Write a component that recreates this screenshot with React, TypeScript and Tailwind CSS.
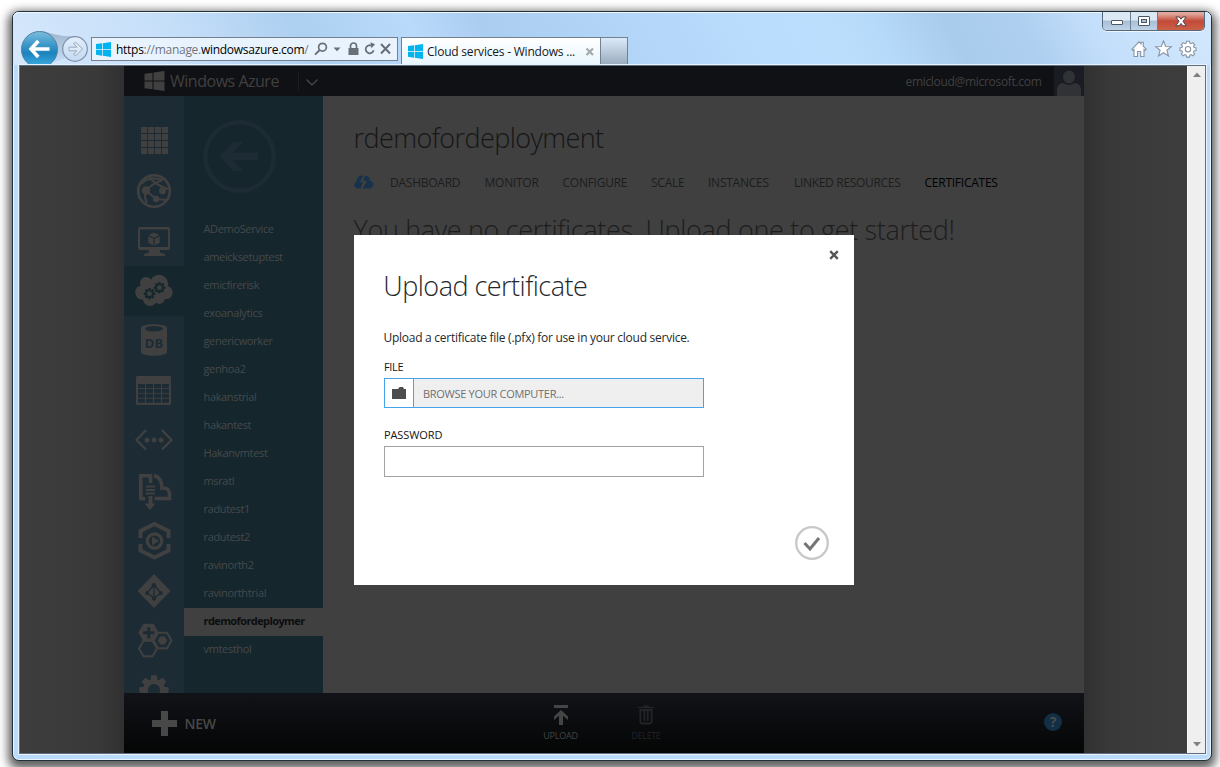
import type { ReactNode } from "react";

const Logo = ({ className }: { className: string }) => (
  <svg viewBox="0 0 16 16" className={className} fill="currentColor">
    <path d="M0 2.2 6.4 1.3V7.5H0zM7.2 1.2 16 0V7.5H7.2zM0 8.3H6.4V14.6L0 13.7zM7.2 8.3H16V16L7.2 14.7z" />
  </svg>
);

const BackForward = () => (
  <svg width="72" height="53" viewBox="0 0 72 53" className="shrink-0">
    <defs>
      <linearGradient id="backFill" x1="0" y1="0" x2="0" y2="1">
        <stop offset="0" stopColor="#7cbcdc" />
        <stop offset="0.4" stopColor="#3795c8" />
        <stop offset="0.6" stopColor="#1c83bd" />
        <stop offset="1" stopColor="#3fb0e2" />
      </linearGradient>
      <linearGradient id="fwdFill" x1="0" y1="0" x2="0" y2="1">
        <stop offset="0" stopColor="#e3eefa" />
        <stop offset="1" stopColor="#c3daf2" />
      </linearGradient>
      <linearGradient id="bridgeFill" x1="0" y1="0" x2="0" y2="1">
        <stop offset="0" stopColor="#9fb6cd" />
        <stop offset="1" stopColor="#c3dcf5" />
      </linearGradient>
    </defs>
    <path d="M24 19C36 23 46 25 56 24L46 46 36 50z" fill="url(#bridgeFill)" />
    <circle cx="20.500" cy="37.500" r="18" fill="url(#backFill)" stroke="#53809f" strokeWidth="1" />
    <path d="M30.500 37H12.500M19.300 29 12 37l7.300 8" fill="none" stroke="#fff" strokeWidth="3.600" />
    <circle cx="56" cy="37" r="12.300" fill="url(#fwdFill)" stroke="#7f93a8" strokeWidth="1.200" />
    <path d="M50 35.200h8l-3.400-3.600 2.200-1.400 6.700 6.800-6.700 6.800-2.200-1.400 3.400-3.600h-8z" fill="#dfeaf6" stroke="#98abc0" strokeWidth="1" />
  </svg>
);

const UrlIcons = () => (
  <svg width="80" height="16" viewBox="0 0 80 16" className="shrink-0" fill="none" stroke="#696f76">
    <circle cx="9.500" cy="6.200" r="3.900" strokeWidth="1.700" />
    <path d="M6.500 9.200 2 13.600" strokeWidth="2" />
    <path d="M20.500 6.500h7l-3.500 3.800z" fill="#696f76" stroke="none" />
    <rect x="35.500" y="7" width="10" height="7" rx="0.500" fill="#696f76" stroke="none" />
    <path d="M37.500 7.500V5a3 3 0 0 1 6 0v2.500" strokeWidth="1.700" />
    <path d="M60.600 9.200A4 4 0 1 1 58.500 4.700" strokeWidth="1.800" />
    <path d="M57.500 1.200 62 3.200 58.500 7.200z" fill="#696f76" stroke="none" />
    <path d="m68 3 9 9.500M77 3 68 12.500" strokeWidth="2" />
  </svg>
);

const BrowserTools = () => (
  <svg width="66" height="18" viewBox="0 0 66 18" fill="#fff" stroke="#8795a5" strokeWidth="1.100" className="shrink-0">
    <path d="M.8 9.300 8 1.800l2 2V2.300h2.300v4l3 3-1.300 1.200-1-.9v6.900H9.700v-5H6.500v5H3v-6.900l-1 .9z" />
    <path d="M32.500 1l2.200 5.500 5.600.2-4.400 3.600 1.600 5.700-5-3.300-5 3.300 1.600-5.700-4.400-3.600 5.600-.2z" />
    <path d="M55.500 1.200h3l.3 2 1.300.5L61.800 2.600 63.700 4.500 62.600 6.200 63 7.500l2 .3v2.800l-2 .3-.5 1.300 1.200 1.700-1.900 1.900-1.700-1.200-1.300.5-.3 2h-3l-.3-2-1.300-.5-1.700 1.200-1.900-1.900 1.200-1.700-.5-1.300-2-.3V7.800l2-.3.500-1.300-1.200-1.700 1.900-1.900 1.700 1.100 1.300-.5z" />
    <circle cx="57" cy="9.200" r="2.700" />
  </svg>
);

const WindowButtons = () => (
  <div className="flex h-[19px] w-[103px] overflow-hidden rounded-b-[5px] border border-t-0 border-[#55687c] shadow-[0_1px_0_#ffffffb0]">
    <div className="flex w-[28px] items-end justify-center border-r border-[#6b7f94] bg-linear-to-b from-[#dce9f5] from-45% via-[#a9bfd5] via-50% to-[#bdd3e8] pb-[4px]">
      <svg width="12" height="6"><rect x=".5" y=".5" width="11" height="4" rx=".5" fill="#fff" stroke="#4b5666" /></svg>
    </div>
    <div className="flex w-[27px] items-center justify-center border-r border-[#6b7f94] bg-linear-to-b from-[#dce9f5] from-45% via-[#a9bfd5] via-50% to-[#bdd3e8]">
      <svg width="12" height="10"><rect x=".5" y=".5" width="11" height="9" rx=".5" fill="#fff" stroke="#4b5666" /><rect x="3.500" y="3.500" width="5" height="3" fill="#a9bfd5" stroke="#4b5666" /></svg>
    </div>
    <div className="flex flex-1 items-center justify-center bg-linear-to-b from-[#dfa79d] from-10% via-[#c24a38] via-50% to-[#cc6046]">
      <svg width="12" height="11" viewBox="0 0 12 11"><path d="M.8 1h3.400L6 3.200 7.800 1h3.400L8 5.300l3.300 4.500H7.800L6 7.500 4.200 9.800H.7L4 5.300z" fill="#fff" stroke="#4d4048" /></svg>
    </div>
  </div>
);

const hex = (cx: number, cy: number, r: number) => {
  const h = r * 0.87;
  return `M${cx - r} ${cy}L${cx - r / 2} ${cy - h}H${cx + r / 2}L${cx + r} ${cy}L${cx + r / 2} ${cy + h}H${cx - r / 2}z`;
};

const G = "#404040";
const D = "#1d2b34";

const GearShape = ({ x, y, s, fill, hole }: { x: number; y: number; s: number; fill: string; hole: string }) => (
  <g transform={`translate(${x} ${y}) scale(${s})`}>
    {[0, 45, 90, 135].map((a) => (
      <rect key={a} x="-2.500" y="-12" width="5" height="24" rx="1" fill={fill} transform={`rotate(${a})`} />
    ))}
    <circle r="9" fill={fill} />
    <circle r="5" fill={hole} />
  </g>
);

const navIcons: ReactNode[] = [
  <g fill={G}>
    {[0, 1, 2, 3].map((r) => [0, 1, 2, 3].map((c) => <rect key={`${r}${c}`} x={7 + c * 7} y={7 + r * 7} width="6" height="6" />))}
  </g>,
  <g fill="none" stroke={G}>
    <circle cx="20" cy="21" r="15.800" strokeWidth="2.600" />
    <path d="M7 14C12 8 20 7 29 10M15 7C20 13 27 17 34 19M12 20.500C16 16 22 12 28 10.500M12 20.500 22 29M22 29 32 30M12 20.500C10 25 11 29 13 33" strokeWidth="2.200" />
    <circle cx="12" cy="20.500" r="4.200" fill={G} stroke="none" />
    <circle cx="28.500" cy="21" r="3.400" fill={G} stroke="none" />
    <circle cx="22" cy="29" r="3.200" fill={G} stroke="none" />
  </g>,
  <g fill={G}>
    <path fillRule="evenodd" d="M6 7h28a2 2 0 0 1 2 2v19a2 2 0 0 1-2 2H26v2.500l5 1.500q1 2-1 2H11q-2 0-1-2l5-1.500V30H6a2 2 0 0 1-2-2V9a2 2 0 0 1 2-2zM6 9.500v17.500h28V9.500z" />
    <path d="m20 12.500 5.500 2.600L20 17.800l-5.500-2.700zM14.200 16.200l5.200 2.600v6.700l-5.200-2.700zM25.800 16.200l-5.200 2.600v6.700l5.200-2.700z" />
  </g>,
  <g>
    <g fill={G}>
      <circle cx="8.500" cy="22.500" r="7.300" /><circle cx="12" cy="13" r="6" /><circle cx="25" cy="14" r="9.200" />
      <circle cx="32" cy="22.500" r="6.700" /><circle cx="16" cy="29" r="7" /><circle cx="25.500" cy="29" r="5" /><rect x="9" y="13" width="22" height="16" />
    </g>
    <GearShape x={15.500} y={23.700} s={0.480} fill="#15262d" hole={G} />
    <GearShape x={25.500} y={17.700} s={0.480} fill="#15262d" hole={G} />
  </g>,
  <g>
    <path fill={G} d="M7 8c0-5 26-5 26 0v24c0 5-26 5-26 0z" />
    <ellipse cx="20" cy="8.700" rx="9" ry="2.800" fill={D} />
    <text x="20" y="28" textAnchor="middle" fontSize="13" fontWeight="700" fill={D}>DB</text>
  </g>,
  <g>
    <rect x="2" y="6" width="35" height="29" rx="1.500" fill={G} />
    {[0, 1, 2, 3].map((r) => [0, 1, 2, 3].map((c) => <rect key={`${r}${c}`} x={4 + c * 8} y={14 + r * 4.9} width="7" height="4" fill={D} />))}
  </g>,
  <g fill="none" stroke={G} strokeWidth="2.200">
    <path d="M12 10 2.500 20 12 29.500M28 10 37.500 20 28 29.500" />
    <g fill={G} stroke="none"><circle cx="13" cy="20" r="2.500" /><circle cx="20" cy="20" r="2.500" /><circle cx="27" cy="20" r="2.500" /></g>
  </g>,
  <g fill="none" stroke={G} strokeWidth="3.600">
    <path d="M11 28.800H6.800V5.800H16.500V13" />
    <path d="M20 5.500C26 7 28 13 28 18q7-.5 7.500 5.500v5H20.500" />
    <path d="M12 16.500h9M12 20h9M12 23.500h9" strokeWidth="2" />
    <path d="M14.500 26h4v7.500h3L16 40l-5.500-6.500h4z" fill={G} stroke="none" />
  </g>,
  <g fill="none" stroke={G}>
    <path d="M6.500 18v-7L20.500 4 34.500 11v7M6.500 24v6.500L20.500 37.500l14-7V24" strokeWidth="4" />
    <circle cx="20.500" cy="21" r="7.200" strokeWidth="3.200" />
    <path d="M18 16.500 25 21l-7 4.500z" fill={G} stroke="none" />
  </g>,
  <g>
    <path d="M20 4 36.500 21 20 38 3.500 21z" fill={G} />
    <g stroke={D} strokeWidth="1.300" fill="none"><path d="M20 15V28M20 15 13 23M20 15 27 23M13 23 20 28 27 23" /></g>
    <g fill={D}><circle cx="20" cy="15.500" r="2.400" /><circle cx="13.200" cy="23" r="2" /><circle cx="26.800" cy="23" r="2" /><circle cx="20" cy="28.500" r="2.200" /></g>
  </g>,
  <g fill="none" stroke={G} strokeWidth="2">
    <path d={hex(14.5, 12.5, 9)} fill={G} />
    <path d={hex(14, 28.5, 9)} />
    <path d={hex(28.5, 20.5, 9)} />
    <path d={hex(28.5, 20.5, 3.5)} fill={G} />
    <path d="M14.800 7v11.500M9 12.800h11.500" stroke={D} strokeWidth="3" />
  </g>,
  <GearShape x={20} y={20} s={1.22} fill={G} hole={D} />,
];

const services = [
  "ADemoService", "ameicksetuptest", "emicfirerisk", "exoanalytics", "genericworker", "genhoa2", "hakanstrial", "hakantest",
  "Hakanvmtest", "msratl", "radutest1", "radutest2", "ravinorth2", "ravinorthtrial", "rdemofordeploymer", "vmtesthol",
];

const tabs: [string, string][] = [
  ["DASHBOARD", "w-[94.500px]"],
  ["MONITOR", "w-[78px]"],
  ["CONFIGURE", "w-[88.500px]"],
  ["SCALE", "w-[57px]"],
  ["INSTANCES", "w-[86px]"],
  ["LINKED RESOURCES", "w-[130.500px] tracking-[-0.310px]"],
  ["CERTIFICATES", "w-[80px] text-black"],
];

const BrowserBar = () => (
  <header className="flex h-[53px] shrink-0 overflow-hidden rounded-t-[6px] bg-[linear-gradient(62deg,#d5e7fb_0%,#c6dff9_14%,#adcff0_25%,#b9dafb_34%,#abcdf0_40%,#b3d6f9_53%,#b9dcfd_60%,#bcdefd_68%,#b6daf9_72%,#a9cbec_78%,#aecff0_84%,#c4dffb_90%,#d3e8fd_100%)] pl-[6px] shadow-[inset_0_1px_0_#eef7ff]">
    <BackForward />
    <div className="mt-[25px] flex h-[24px] w-[307px] items-center border border-[#75808e] bg-[#e9f3fe] pl-[4px]">
      <Logo className="mr-[5px] h-[15px] w-[15px] shrink-0 text-[#00b4f0]" />
      <div className="w-[194px] pt-[2px] text-[12px] leading-[20px] tracking-[-0.280px] whitespace-nowrap text-[#70767d]">
        <span className="text-black">https</span>://manage.<span className="text-black">windowsazure.com</span>/
      </div>
      <div className="ml-[3px]"><UrlIcons /></div>
    </div>
    <div className="mt-[25px] ml-[3px] flex h-[28px] w-[200px] items-center border border-b-0 border-[#75808e] bg-linear-to-b from-white to-[#e8f5fd] pl-[6px]">
      <Logo className="mr-[4px] h-[15px] w-[15px] shrink-0 text-[#00b4f0]" />
      <span className="w-[158px] pt-px text-[12px] tracking-[-0.210px] whitespace-nowrap text-[#14181c]">Cloud services - Windows ...</span>
      <svg width="10" height="10" className="shrink-0"><path d="m1.500 1.500 6.500 6.500M8 1.500 1.500 8" stroke="#a3a9ae" strokeWidth="2.200" /></svg>
    </div>
    <div className="mt-[25px] h-[28px] w-[27px] border border-b-0 border-l-0 border-[#75808e] bg-linear-to-b from-[#dcebfa] to-[#98aabd]" />
    <div className="ml-auto flex flex-col items-end pr-[6px]">
      <WindowButtons />
      <div className="mt-[9px] mr-[8px]"><BrowserTools /></div>
    </div>
  </header>
);

const TopBar = () => (
  <div className="flex h-[30px] shrink-0 items-center bg-[#101115] pl-[20px] text-[#404040]">
    <Logo className="h-[20px] w-[21px]" />
    <span className="ml-[5px] w-[128px] text-[16px] leading-[30px] tracking-[-0.480px] whitespace-nowrap">Windows Azure</span>
    <div className="h-[18px] w-px bg-[#1c1d21]" />
    <svg width="14" height="14" className="ml-[6px]"><path d="m1.500 5.500 5.500 5.500 5.500-5.500" fill="none" stroke="#45464a" strokeWidth="1.300" /></svg>
    <span className="ml-auto pt-[2px] text-[12px] tracking-[-0.310px]">emicloud@microsoft.com</span>
    <div className="ml-[12.500px] h-[30px] w-[30px] bg-[#191c22]">
      <svg width="30" height="30" fill="#303236"><ellipse cx="15" cy="11" rx="6" ry="6.500" /><path d="M3 30V24q0-6 6-7 6 4 12 0 6 1 6 7v6z" /></svg>
    </div>
  </div>
);

const Content = () => (
  <main className="flex min-w-0 flex-1 flex-col bg-[#404040] pt-[21px] pl-[30.500px] text-[#1d1d1d]">
    <h1 className="h-[42px] text-[27px] leading-[42px] font-light tracking-[-0.580px] whitespace-nowrap text-[#161616]">rdemofordeployment</h1>
    <nav className="mt-[14px] flex h-[20px] items-center text-[12px] tracking-[-0.250px] whitespace-nowrap">
      <svg width="20" height="14" viewBox="0 0 20 14" className="mr-[16.500px] mb-[2px] shrink-0 text-[#17324a]" fill="currentColor">
        <path d="M3.500 13.500a3.600 3.600 0 0 1-.8-7C2 2 7 0 9.500.6L6 7h3L6.500 13.500z" /><path d="M10.500 1.200C14 .5 16.500 3 16.300 6c3.700.3 4.700 6-.3 7.500H8.500L13 6h-3.500z" />
      </svg>
      {tabs.map(([name, cls]) => <span key={name} className={`shrink-0 ${cls}`}>{name}</span>)}
    </nav>
    <h2 className="mt-[16px] h-[42px] text-[27px] leading-[42px] font-light tracking-[-0.340px] whitespace-nowrap">You have no certificates. Upload one to get started!</h2>
  </main>
);

const CommandBar = () => (
  <footer className="grid h-[60px] shrink-0 grid-cols-[392px_85px_90px_1fr] bg-linear-to-b from-[#111318] to-[#050606] text-[#454545]">
    <div className="flex items-center pl-[28px]">
      <svg width="25" height="25" className="text-[#484848]" fill="currentColor"><path d="M9 0h7v9h9v7h-9v9H9v-9H0V9h9z" /></svg>
      <span className="ml-[7.500px] pt-[2px] text-[14px] leading-[20px] font-semibold tracking-[-0.300px] text-[#484848]">NEW</span>
    </div>
    <div className="flex flex-col items-center pt-[12px] pl-[4px]">
      <svg width="14" height="20" fill="currentColor"><path d="M0 0h14v3H0zM7 5l7 6.500v3.500L9 10.800V20H5v-9.200L0 15v-3.500z" /></svg>
      <span className="mt-[4px] text-[9px] leading-[13px] tracking-[-0.230px]">UPLOAD</span>
    </div>
    <div className="flex flex-col items-center pt-[12px] text-[#222427]">
      <svg width="16" height="20" fill="none" stroke="currentColor"><path d="M0 2.500h16M5.500 1h5" strokeWidth="1.300" /><path d="M2.300 5h11.400v11q0 2.500-2 2.500H4.300q-2 0-2-2.500zM6.300 6v10M9.700 6v10" strokeWidth="1.800" /></svg>
      <span className="mt-[4px] text-[9px] leading-[13px] tracking-[-0.360px]">DELETE</span>
    </div>
    <div className="flex items-center justify-end pr-[22px] pb-[2px]">
      <span className="flex h-[18px] w-[18px] items-center justify-center rounded-full bg-[#122f45] text-[14px] leading-[18px] font-bold text-[#4a4a4a]">?</span>
    </div>
  </footer>
);

const Dialog = () => (
  <div className="absolute top-[169px] left-[334px] flex h-[350px] w-[500px] flex-col bg-white px-[30px] text-[#26282c]">
    <div className="mr-[-15px] flex h-[30px] items-end justify-end pb-[5px]">
      <svg width="10" height="10"><path d="m1.200 1.200 7.600 7.600M8.800 1.200 1.200 8.800" stroke="#555" strokeWidth="2.400" /></svg>
    </div>
    <h3 className="ml-[-0.700px] h-[42px] text-[27px] leading-[42px] font-light tracking-[-0.520px] whitespace-nowrap">Upload certificate</h3>
    <p className="mt-[21px] ml-[-0.500px] h-[20px] text-[12px] leading-[20px] tracking-[-0.265px] whitespace-nowrap">Upload a certificate file (.pfx) for use in your cloud service.</p>
    <label className="mt-[11px] text-[11px] leading-[16px] font-medium tracking-[-0.350px] text-[#141414]">FILE</label>
    <div className="mt-[3px] flex h-[30px] w-[320px] shrink-0 border border-[#45a5ec]">
      <div className="flex w-[29px] items-center justify-center border-r border-[#45a5ec]">
        <svg width="14" height="12"><path d="M0 2h6l1.500-2H11l1 2h2v10H0z" fill="#4d4d4d" /></svg>
      </div>
      <div className="flex-1 bg-[#efefef] pl-[9px] text-[11px] leading-[30px] tracking-[-0.290px] text-[#6f6f6f]">BROWSE YOUR COMPUTER...</div>
    </div>
    <label className="mt-[19px] text-[11px] leading-[16px] font-medium tracking-[-0.100px] text-[#141414]">PASSWORD</label>
    <div className="mt-[3px] h-[31px] w-[320px] shrink-0 border border-[#a3a3a3] bg-white" />
    <div className="mt-[49px] mr-[-5px] flex justify-end">
      <svg width="34" height="34" fill="none"><circle cx="17" cy="17" r="15.800" stroke="#c8c8c8" strokeWidth="2.300" /><path d="m9.500 17 5.500 6 9-11" stroke="#757575" strokeWidth="3" /></svg>
    </div>
  </div>
);

const Scrollbar = () => (
  <div className="flex w-[18px] shrink-0 flex-col items-center justify-between border-l border-[#f8f8f8] bg-[#efefef] py-[6px]">
    <svg width="8" height="5"><path d="M0 5 4 .5 8 5z" fill="#808080" /></svg>
    <svg width="8" height="5"><path d="M0 0 4 4.500 8 0z" fill="#808080" /></svg>
  </div>
);

export default function App() {
  return (
    <div className="h-[767px] w-[1220px] overflow-hidden bg-white pt-[11px] pl-[12px] [font-family:'Open_Sans','Noto_Sans',sans-serif]">
      <div className="flex h-[750px] w-[1200px] flex-col rounded-[7px] border border-[#22303a] bg-[#badbfb] shadow-[inset_0_0_0_1px_#e8f4ff,0_4px_10px_4px_rgba(0,0,0,0.620)]">
        <BrowserBar />
        <div className="relative ml-[6px] flex h-[689px] w-[1187px] shrink-0 border border-[#5f6f80] bg-[#3c3c3c] shadow-[0_0_0_1px_#e6f2fe]">
          <div className="w-[104px] shrink-0 bg-linear-to-l from-[#303030] via-[#393939] via-25% to-[#3d3d3d]" />
          <div className="flex w-[960px] shrink-0 flex-col">
            <TopBar />
            <div className="flex min-h-0 flex-1">
              <nav className="w-[60px] shrink-0 overflow-hidden bg-[#1d2b34] pt-[20px]">
                {navIcons.map((icon, i) => (
                  <div key={i} className={`flex h-[50px] justify-center pt-[4px] ${i === 3 ? "bg-[#15262d]" : ""}`}>
                    <svg width="40" height="42" viewBox="0 0 40 42">{icon}</svg>
                  </div>
                ))}
              </nav>
              <aside className="w-[139px] shrink-0 overflow-hidden bg-[#15262d]">
                <div className="flex h-[120px] items-center pl-[18px]">
                  <svg width="74" height="74" fill="none" stroke="#1d2b34"><circle cx="37.500" cy="37.500" r="34.200" strokeWidth="4.600" /><path d="M56 37.500H24" strokeWidth="7" /><path d="M31 23h10L27.500 37.500 41 52H31L17.500 37.500z" fill="#1d2b34" stroke="none" /></svg>
                </div>
                {services.map((name) => (
                  <div
                    key={name}
                    className={`h-[28px] pl-[19.500px] text-[11px] leading-[26px] whitespace-nowrap ${name === "rdemofordeploymer" ? "bg-[#404040] font-bold tracking-[-0.600px] text-[#0c0d10]" : "tracking-[-0.350px] text-[#45494b]"}`}
                  >
                    {name}
                  </div>
                ))}
              </aside>
              <Content />
            </div>
            <CommandBar />
          </div>
          <div className="flex-1 bg-linear-to-r from-[#303030] via-[#393939] via-25% to-[#3d3d3d]" />
          <Scrollbar />
          <Dialog />
        </div>
      </div>
    </div>
  );
}
